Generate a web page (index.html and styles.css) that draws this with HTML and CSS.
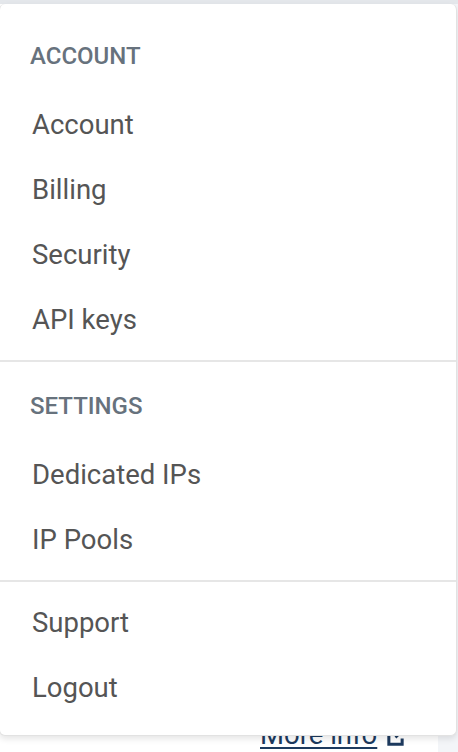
FILE: index.html
```html
<!DOCTYPE html>
<html lang="en">
<head>
<meta charset="utf-8">
<title>Account menu</title>
<link rel="stylesheet" href="styles.css">
</head>
<body>
<div class="page">
  <div class="topbar"></div>
  <div class="content">
    <div class="main">
      <a class="more-link" href="#">More info<svg class="ext-icon" viewBox="0 0 20 20" width="19" height="19" aria-hidden="true"><path d="M9 3H3v14h14v-6" fill="none" stroke="currentColor" stroke-width="3.2"/><path d="M12 2h6v6M18 2l-8 8" fill="none" stroke="currentColor" stroke-width="2.8"/></svg></a>
    </div>
    <div class="aside"></div>
  </div>

  <nav class="menu">
    <div class="section">
      <div class="section-title">ACCOUNT</div>
      <a class="item" href="#">Account</a>
      <a class="item" href="#">Billing</a>
      <a class="item" href="#">Security</a>
      <a class="item" href="#">API keys</a>
    </div>
    <div class="section">
      <div class="section-title">SETTINGS</div>
      <a class="item" href="#">Dedicated IPs</a>
      <a class="item" href="#">IP Pools</a>
    </div>
    <div class="section section-plain">
      <a class="item" href="#">Support</a>
      <a class="item" href="#">Logout</a>
    </div>
  </nav>
</div>
</body>
</html>
```
FILE: styles.css
```css
* { box-sizing: border-box; }

html, body {
  margin: 0;
  padding: 0;
  background: #ffffff;
  font-family: Roboto, "Liberation Sans", Arial, sans-serif;
}

.page {
  position: relative;
  width: 458px;
  height: 752px;
  overflow: hidden;
}

.topbar {
  height: 4px;
  background: #e4e7eb;
}

.content {
  display: flex;
  height: 748px;
}

.main {
  flex: 1;
  padding-top: 717px;
  padding-left: 260px;
}

.aside {
  width: 20px;
  background: #f3f5f8;
}

.more-link {
  display: inline-flex;
  align-items: flex-end;
  gap: 9px;
  font-size: 27.5px;
  line-height: 28px;
  color: #1d3a5e;
  text-decoration: underline;
  text-decoration-thickness: 2px;
  text-underline-offset: 3px;
}

.ext-icon {
  display: block;
  margin-bottom: 2px;
}

.menu {
  position: absolute;
  top: 4px;
  left: -1px;
  width: 458px;
  background: #ffffff;
  border: 1px solid #e2e2e2;
  border-top: none;
  border-radius: 6px;
  box-shadow: 0 3px 6px rgba(0, 0, 0, 0.10);
  padding: 8px 0 7px;
}

.section {
  padding: 30px 0 8px;
  border-top: 2px solid #e6e6e6;
}

.section:first-child {
  border-top: none;
}

.section-plain {
  padding-top: 8px;
}

.section-title {
  padding-left: 30px;
  font-size: 24px;
  font-weight: 500;
  line-height: 28px;
  color: #67727d;
  margin-bottom: 22px;
}

.item {
  display: block;
  padding-left: 32px;
  font-size: 27.5px;
  line-height: 65px;
  height: 65px;
  color: #555555;
  text-decoration: none;
}
```
